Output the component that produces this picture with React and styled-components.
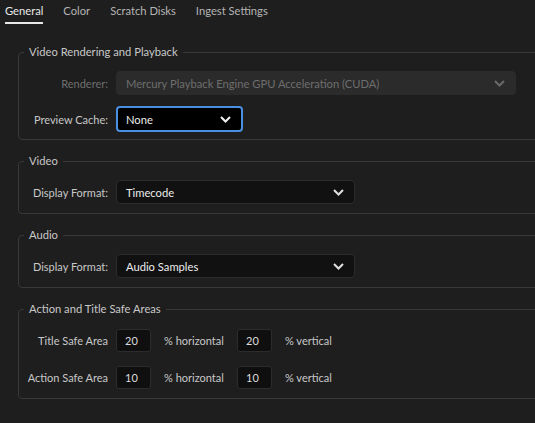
import styled, { createGlobalStyle } from "styled-components";
import { useState } from "react";

const GlobalStyle = createGlobalStyle`
    html, body {
        margin: 0;
        padding: 0;
        background: #1e1e1e;
        overflow: hidden;
    }
    body {
        font-family: Lato, "Open Sans", sans-serif;
        font-size: 11px;
        color: #c8c8c8;
    }
`;

const Page = styled.div`
    width: 535px;
    height: 423px;
    background: #1e1e1e;
    overflow: hidden;
`;

const Tabs = styled.div`
    display: flex;
    gap: 20px;
    padding: 0 0 0 5px;
    height: 24px;
`;

const Tab = styled.div`
    font-size: 11.2px;
    line-height: 22px;
    color: ${({ active }) => (active ? "#e8e8e8" : "#b4b4b4")};
    border-bottom: 2px solid ${({ active }) => (active ? "#e8e8e8" : "transparent")};
    cursor: pointer;
`;

const Body = styled.div`
    display: flex;
    flex-direction: column;
    gap: 13px;
    padding: 20px 0 0 18px;
`;

const Group = styled.fieldset`
    margin: 0;
    width: 560px;
    box-sizing: border-box;
    border: 1px solid #383838;
    border-radius: 4px;
    padding: ${({ pad }) => pad};
    display: flex;
    flex-direction: column;
    gap: ${({ gap }) => gap || "11px"};
`;

const Legend = styled.legend`
    padding: 0 5px;
    margin-left: 5px;
    font-size: 11.2px;
    line-height: 16px;
    color: #c8c8c8;
`;

const Row = styled.div`
    display: flex;
    align-items: center;
    gap: 8px;
`;

const Label = styled.div`
    width: 89px;
    text-align: right;
    white-space: nowrap;
    color: ${({ disabled }) => (disabled ? "#6e6e6e" : "#c8c8c8")};
`;

const Select = styled.div`
    box-sizing: border-box;
    width: ${({ w }) => w}px;
    height: ${({ h }) => h || 24}px;
    display: flex;
    align-items: center;
    justify-content: space-between;
    padding: 0 10px 0 ${({ focus }) => (focus ? 8 : 9)}px;
    border-radius: 4px;
    background: ${({ disabled, focus }) => (disabled ? "#2b2b2b" : focus ? "#000" : "#111111")};
    border: ${({ disabled, focus }) =>
        focus ? "2px solid #4b8fe0" : disabled ? "1px solid #2b2b2b" : "1px solid #2c2c2c"};
    color: ${({ disabled }) => (disabled ? "#6e6e6e" : "#ececec")};
    font-size: 11.2px;
`;

const Chevron = ({ color }) => (
    <svg width="11" height="7" viewBox="0 0 11 7">
        <path d="M1 1 L5.5 5.5 L10 1" fill="none" stroke={color} strokeWidth="2" />
    </svg>
);

const NumBox = styled.div`
    box-sizing: border-box;
    width: 35px;
    height: 23px;
    display: flex;
    align-items: center;
    padding-left: 8px;
    background: #0f0f0f;
    border: 1px solid #2c2c2c;
    border-radius: 3px;
    color: #dcdcdc;
`;

const Unit = styled.div`
    width: 70px;
    box-sizing: border-box;
    padding-left: 5px;
    color: #c8c8c8;
    white-space: nowrap;
`;

const tabs = ["General", "Color", "Scratch Disks", "Ingest Settings"];

const App = () => {
    const [tab, setTab] = useState("General");

    return (
        <Page>
            <GlobalStyle />
            <Tabs>
                {tabs.map((t) => (
                    <Tab key={t} active={t === tab} onClick={() => setTab(t)}>
                        {t}
                    </Tab>
                ))}
            </Tabs>

            <Body>
                <Group pad="11px 0 7px 0">
                    <Legend>Video Rendering and Playback</Legend>
                    <Row>
                        <Label disabled>Renderer:</Label>
                        <Select w={400} disabled>
                            Mercury Playback Engine GPU Acceleration (CUDA)
                            <Chevron color="#6a6a6a" />
                        </Select>
                    </Row>
                    <Row>
                        <Label>Preview Cache:</Label>
                        <Select w={127} h={26} focus>
                            None
                            <Chevron color="#f0f0f0" />
                        </Select>
                    </Row>
                </Group>

                <Group pad="11px 0 9px 0">
                    <Legend>Video</Legend>
                    <Row>
                        <Label>Display Format:</Label>
                        <Select w={239}>
                            Timecode
                            <Chevron color="#e0e0e0" />
                        </Select>
                    </Row>
                </Group>

                <Group pad="11px 0 9px 0">
                    <Legend>Audio</Legend>
                    <Row>
                        <Label>Display Format:</Label>
                        <Select w={239}>
                            Audio Samples
                            <Chevron color="#e0e0e0" />
                        </Select>
                    </Row>
                </Group>

                <Group pad="12px 0 9px 0" gap="14px">
                    <Legend>Action and Title Safe Areas</Legend>
                    <Row>
                        <Label>Title Safe Area</Label>
                        <NumBox>20</NumBox>
                        <Unit>% horizontal</Unit>
                        <NumBox>20</NumBox>
                        <Unit>% vertical</Unit>
                    </Row>
                    <Row>
                        <Label>Action Safe Area</Label>
                        <NumBox>10</NumBox>
                        <Unit>% horizontal</Unit>
                        <NumBox>10</NumBox>
                        <Unit>% vertical</Unit>
                    </Row>
                </Group>
            </Body>
        </Page>
    );
};

export default App;
